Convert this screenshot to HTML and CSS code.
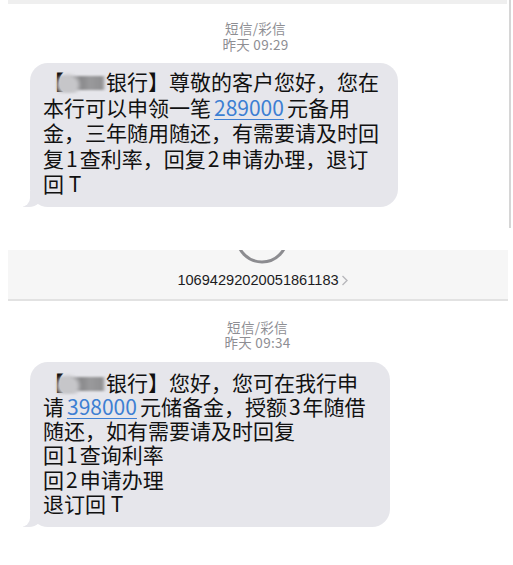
FILE: index.html
```html
<!DOCTYPE html>
<html lang="zh-CN">
<head>
<meta charset="utf-8">
<title>短信</title>
<link rel="stylesheet" href="styles.css">
</head>
<body>
<div class="top">
  <div class="topline"></div>
  <div class="meta">
    <div class="ml">短信/彩信</div>
    <div class="ml">昨天 09:29</div>
  </div>
  <div class="row">
    <div class="bubble b1">【<span class="blur"></span>银行】尊敬的客户您好，您在<br>本行可以申领一笔<span class="num">289000</span>元备用<br>金，三年随用随还，有需要请及时回<br>复<span class="d">1</span>查利率，回复<span class="d">2</span>申请办理，退订<br>回 T</div>
  </div>
</div>

<div class="band">
  <svg class="ring" width="56" height="15" viewBox="0 0 56 15"><circle cx="28" cy="-13" r="25" fill="none" stroke="#8c8c90" stroke-width="3"/></svg>
  <div class="sender">10694292020051861183<svg class="chev" width="8" height="11" viewBox="0 0 8 11"><polyline points="1.5,1 6,5.5 1.5,10" fill="none" stroke="#b8b8bc" stroke-width="1.4"/></svg></div>
</div>

<div class="meta meta2">
  <div class="ml">短信/彩信</div>
  <div class="ml">昨天 09:34</div>
</div>
<div class="row">
  <div class="bubble b2">【<span class="blur"></span>银行】您好，您可在我行申<br>请<span class="num">398000</span>元储备金，授额<span class="d">3</span>年随借<br>随还，如有需要请及时回复<br>回<span class="d">1</span>查询利率<br>回<span class="d">2</span>申请办理<br>退订回 T</div>
</div>
</body>
</html>
```

FILE: styles.css
```css
html, body {
  margin: 0;
  padding: 0;
  background: #ffffff;
}
body {
  width: 513px;
  height: 565px;
  overflow: hidden;
  font-family: "Noto Sans CJK SC", "Noto Sans", sans-serif;
}
.top {
  width: 509px;
  padding-bottom: 21px;
  border-right: 2px solid #d6d6d6;
}
.topline {
  height: 4px;
  margin: 0 2px 0 8px;
  background: #efefef;
}
.meta {
  margin-top: 17px;
  text-align: center;
  font-size: 13.5px;
  color: #8e8e93;
  letter-spacing: 0.3px;
  padding-left: 2px;
}
.ml {
  height: 15.5px;
  line-height: 15.5px;
}
.row {
  margin-top: 11px;
  padding-left: 30px;
}
.bubble {
  position: relative;
  box-sizing: border-box;
  background: #e6e6eb;
  border-radius: 18px;
  color: #111111;
  font-size: 21px;
  white-space: nowrap;
  padding-left: 13px;
}
.b1 {
  width: 368px;
  line-height: 25.5px;
  padding-top: 6px;
  padding-bottom: 10px;
}
.b2 {
  width: 360px;
  line-height: 24.3px;
  padding-top: 8px;
  padding-bottom: 12px;
}
.bubble::before {
  content: "";
  position: absolute;
  bottom: 0;
  left: -7px;
  width: 20px;
  height: 16px;
  background: #e6e6eb;
  border-bottom-right-radius: 14px;
}
.bubble::after {
  content: "";
  position: absolute;
  bottom: 0;
  left: -12px;
  width: 12px;
  height: 17px;
  background: #ffffff;
  border-bottom-right-radius: 9px;
}
.num {
  color: #3d7fd3;
  text-decoration: underline;
  text-decoration-thickness: 1px;
  text-underline-offset: 3px;
  margin: 0 3px;
}
.d {
  margin: 0 2px;
}
.blur {
  display: inline-block;
  vertical-align: -3px;
  width: 50px;
  height: 20px;
  margin-left: -8px;
  background:
    radial-gradient(ellipse 14px 13px at 12px 12px, #c6c6c9 0%, #c6c6c9 60%, rgba(198,198,201,0) 100%),
    linear-gradient(90deg, rgba(0,0,0,0) 0px, #959597 12px, #8b8b8d 26px, #9a9a9c 34px, #909092 46px, rgba(0,0,0,0) 50px);
  background-repeat: no-repeat;
  background-size: 100% 100%, 100% 14px;
  background-position: 0 0, 0 3px;
  filter: blur(1.2px);
}
.band {
  margin: 28px 5px 0 8px;
  background: #f6f6f6;
  border-bottom: 2px solid #e2e2e2;
  padding-bottom: 10px;
  text-align: center;
}
.ring {
  display: block;
  margin: -6px auto 0;
  position: relative;
  left: 4px;
}
.sender {
  margin-top: 7px;
  font-family: "Liberation Sans", Arial, sans-serif;
  font-size: 14.6px;
  line-height: 17px;
  color: #1c1c1e;
  padding-left: 10px;
}
.chev {
  margin-left: 2px;
  vertical-align: -1px;
}
.meta2 {
  margin-top: 19px;
}
```
